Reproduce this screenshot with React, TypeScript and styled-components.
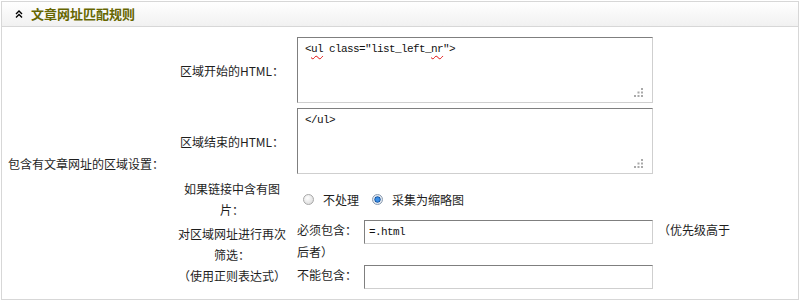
import React from 'react'
import styled, { createGlobalStyle } from 'styled-components'

const GlobalStyle = createGlobalStyle`
  html, body {
    margin: 0;
    padding: 0;
    background: #fff;
  }
  body {
    font-family: "Noto Sans CJK SC", "Liberation Sans", sans-serif;
    font-size: 12px;
    color: #1e1e1e;
  }
`

const Panel = styled.div`
  margin: 1px 0 0 1px;
  width: 798px;
  height: 299px;
  box-sizing: border-box;
  border: 1px solid #d7d7d7;
`

const Header = styled.div`
  height: 24px;
  border-bottom: 1px solid #d7d7d7;
  background: linear-gradient(#ffffff, #f1f1f1);
  display: flex;
  align-items: center;
  padding-left: 13px;
  gap: 8px;
`

const Title = styled.h3`
  margin: 0;
  font-size: 13px;
  font-weight: bold;
  color: #666600;
  line-height: 24px;
`

const Body = styled.div`
  display: flex;
  padding: 10px 0;
`

const SideLabel = styled.div`
  width: 170px;
  box-sizing: border-box;
  padding-left: 6px;
  display: flex;
  align-items: center;
`

const Rows = styled.div`
  display: flex;
  flex-direction: column;
`

const Row = styled.div<{ $top?: number; $height?: number }>`
  display: flex;
  align-items: center;
  margin-top: ${p => p.$top ?? 0}px;
  ${p => (p.$height ? `height: ${p.$height}px;` : '')}
`

const RowLabel = styled.div`
  width: 120px;
  box-sizing: border-box;
  padding: 0 3px;
  text-align: center;
  line-height: 21px;
`

const Field = styled.div`
  padding-left: 5px;
`

const CodeBox = styled.div`
  position: relative;
  width: 356px;
  height: 66px;
  box-sizing: border-box;
  border: 1px solid #cfcfcf;
  border-top-color: #7f7f7f;
  border-left-color: #7f7f7f;
  padding: 4px 7px;
  font-family: "Liberation Mono", monospace;
  font-size: 11px;
  letter-spacing: -0.6px;
  line-height: 14px;
  color: #111;
  white-space: pre;
`

const Typo = styled.span`
  text-decoration: underline wavy #e01010;
  text-decoration-thickness: 1px;
  text-underline-offset: 3px;
`

const Grip = styled.svg`
  position: absolute;
  right: 9px;
  bottom: 5px;
`

const RadioGroup = styled.div`
  display: flex;
  align-items: center;
  padding-left: 6px;
`

const RadioLabel = styled.label<{ $gap?: number }>`
  display: flex;
  align-items: center;
  gap: 9px;
  margin-left: ${p => p.$gap ?? 0}px;
`

const Radio = styled.span<{ $checked?: boolean }>`
  width: 11px;
  height: 11px;
  border-radius: 50%;
  box-sizing: border-box;
  border: 1px solid ${p => (p.$checked ? '#8a9bb0' : '#a8a8a8')};
  background: ${p =>
    p.$checked
      ? 'radial-gradient(circle, #3c8fe6 0 1.8px, #0e4e9c 2.8px, #dfe6ee 3.4px, #f6f7f9 100%)'
      : 'radial-gradient(circle at 40% 35%, #ffffff, #d4d4d4)'};
`

const FilterLine = styled.div<{ $top?: number }>`
  width: 440px;
  line-height: 16px;
  margin-top: ${p => p.$top ?? 0}px;
`

const TextInput = styled.input`
  display: inline-block;
  vertical-align: middle;
  width: 289px;
  height: 24px;
  margin: 0 5px 0 7px;
  box-sizing: border-box;
  border: 1px solid #cfcfcf;
  border-top-color: #7f7f7f;
  border-left-color: #7f7f7f;
  padding: 0 4px;
  font-family: "Liberation Mono", monospace;
  font-size: 11px;
  letter-spacing: -0.6px;
  color: #111;
  outline: none;
`

const Chevron = () => (
  <svg width="8" height="8" viewBox="0 0 8 8">
    <path d="M1 4 L4 1 L7 4 M1 7.5 L4 4.5 L7 7.5" fill="none" stroke="#000" strokeWidth="1.4" />
  </svg>
)

const GripDots = () => (
  <Grip width="9" height="9" viewBox="0 0 9 9">
    <g fill="#a9a9a9">
      <rect x="7" y="0" width="2" height="2" />
      <rect x="3.5" y="3.5" width="2" height="2" />
      <rect x="7" y="3.5" width="2" height="2" />
      <rect x="0" y="7" width="2" height="2" />
      <rect x="3.5" y="7" width="2" height="2" />
      <rect x="7" y="7" width="2" height="2" />
    </g>
  </Grip>
)

export default function App() {
  return (
    <>
      <GlobalStyle />
      <Panel>
        <Header>
          <Chevron />
          <Title>文章网址匹配规则</Title>
        </Header>
        <Body>
          <SideLabel>包含有文章网址的区域设置：</SideLabel>
          <Rows>
            <Row>
              <RowLabel>区域开始的HTML：</RowLabel>
              <Field>
                <CodeBox>
                  {'<'}<Typo>ul</Typo>{' class="list_left_'}<Typo>nr</Typo>{'">'}
                  <GripDots />
                </CodeBox>
              </Field>
            </Row>
            <Row $top={5}>
              <RowLabel>区域结束的HTML：</RowLabel>
              <Field>
                <CodeBox>
                  {'</ul>'}
                  <GripDots />
                </CodeBox>
              </Field>
            </Row>
            <Row $top={4} $height={42}>
              <RowLabel>如果链接中含有图片：</RowLabel>
              <Field>
                <RadioGroup>
                  <RadioLabel>
                    <Radio />
                    不处理
                  </RadioLabel>
                  <RadioLabel $gap={13}>
                    <Radio $checked />
                    采集为缩略图
                  </RadioLabel>
                </RadioGroup>
              </Field>
            </Row>
            <Row>
              <RowLabel>
                对区域网址进行再次筛选：
                <br />
                （使用正则表达式）
              </RowLabel>
              <Field>
                <FilterLine>
                  必须包含：
                  <TextInput defaultValue="=.html" />
                  （优先级高于后者）
                </FilterLine>
                <FilterLine $top={5}>
                  不能包含：
                  <TextInput defaultValue="" />
                </FilterLine>
              </Field>
            </Row>
          </Rows>
        </Body>
      </Panel>
    </>
  )
}
